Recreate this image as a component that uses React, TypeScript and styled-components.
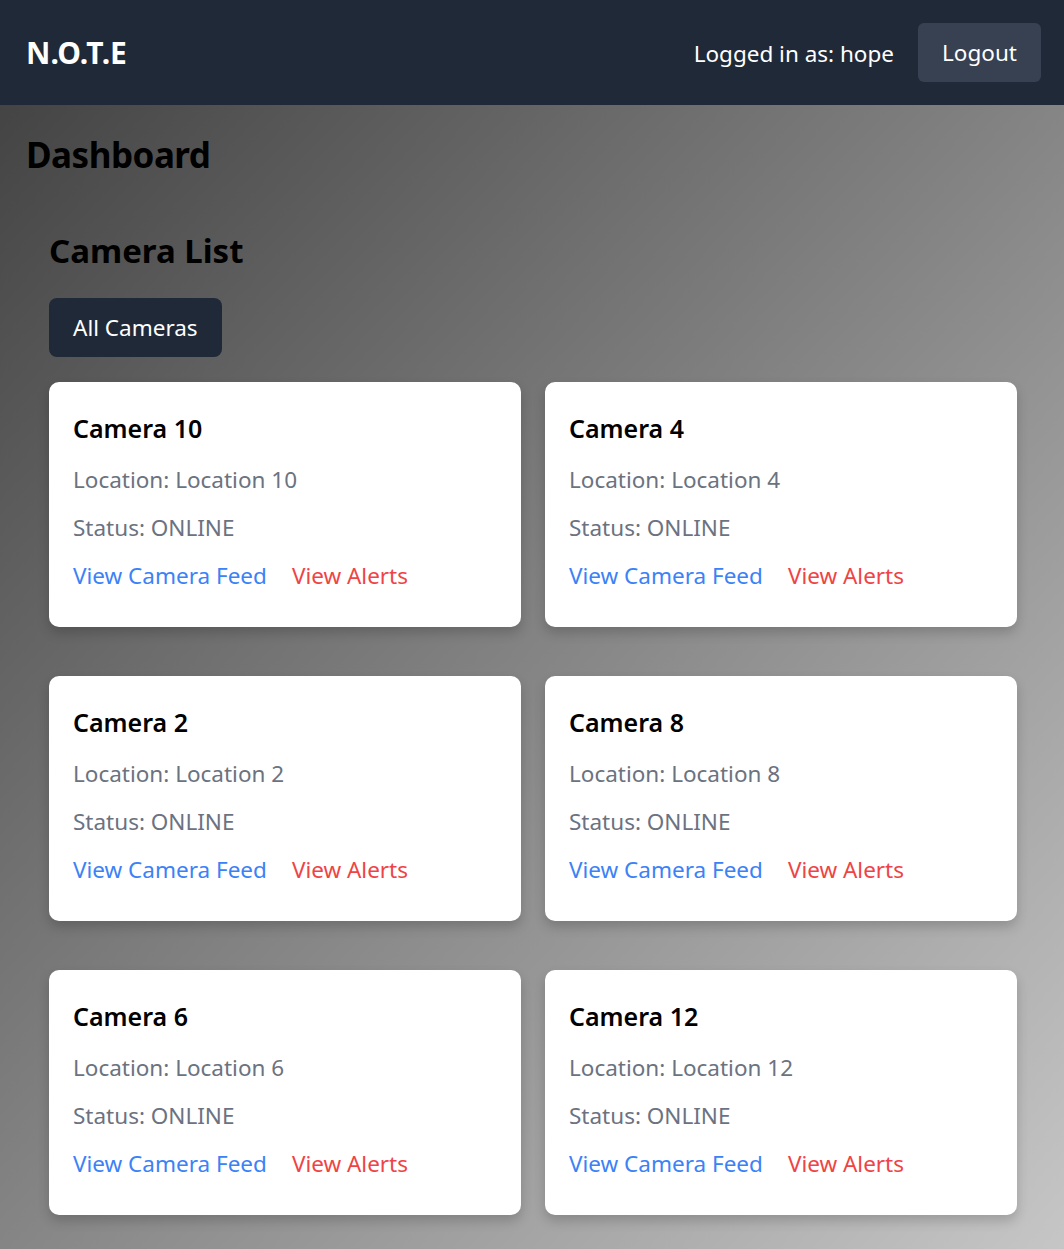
import React from "react";
import styled, { createGlobalStyle } from "styled-components";

const GlobalStyle = createGlobalStyle`
  html, body {
    margin: 0;
    padding: 0;
  }
  body {
    font-family: "Noto Sans", "Open Sans", sans-serif;
    background: #c6c6c6;
  }
  * { box-sizing: border-box; }
`;

const Page = styled.div`
  min-height: 1249px;
  display: flex;
  flex-direction: column;
`;

const Header = styled.header`
  height: 105px;
  background: #1f2937;
  display: flex;
  align-items: center;
  justify-content: space-between;
  padding: 0 23px 0 26px;
  color: #ffffff;
`;

const Logo = styled.div`
  font-size: 30px;
  font-weight: 700;
  line-height: 36px;
`;

const UserArea = styled.div`
  display: flex;
  align-items: center;
  gap: 24px;
`;

const UserText = styled.span`
  font-size: 22.5px;
  line-height: 30px;
  padding-top: 2px;
`;

const LogoutButton = styled.button`
  width: 123px;
  height: 59px;
  border: none;
  border-radius: 6px;
  background: #374151;
  color: #ffffff;
  font-family: inherit;
  font-size: 22.5px;
  cursor: pointer;
`;

const Main = styled.main`
  flex: 1;
  background: linear-gradient(to bottom right, #444444, #c6c6c6);
  padding: 27px 47px 34px 26px;
`;

const PageTitle = styled.h1`
  margin: 0 0 31px;
  font-size: 35px;
  line-height: 45px;
  font-weight: 700;
  letter-spacing: -0.5px;
  color: #000000;
`;

const Section = styled.section`
  padding: 24px 0 0 23px;
`;

const SectionTitle = styled.h2`
  margin: 0 0 28px;
  font-size: 33px;
  line-height: 38px;
  font-weight: 700;
  color: #000000;
`;

const FilterButton = styled.button`
  height: 59px;
  padding: 0 24px;
  border: none;
  border-radius: 8px;
  background: #1f2937;
  color: #ffffff;
  font-family: inherit;
  font-size: 22.5px;
  margin-bottom: 25px;
  cursor: pointer;
`;

const Grid = styled.div`
  display: grid;
  grid-template-columns: repeat(2, 1fr);
  column-gap: 24px;
  row-gap: 49px;
`;

const Card = styled.div`
  background: #ffffff;
  border-radius: 10px;
  padding: 30px 24px 36px;
  box-shadow: 0 6px 12px rgba(0, 0, 0, 0.18);
`;

const CardTitle = styled.h3`
  margin: 0 0 20px;
  font-size: 25px;
  line-height: 33px;
  font-weight: 600;
  color: #000000;
`;

const InfoLine = styled.p`
  margin: 0 0 18px;
  font-size: 22.5px;
  line-height: 30px;
  color: #6b7280;
`;

const Links = styled.div`
  display: flex;
  gap: 25px;
  font-size: 22.5px;
  line-height: 30px;
`;

const CardLink = styled.a<{ $tone: "blue" | "red" }>`
  color: ${(p) => (p.$tone === "blue" ? "#3b82f6" : "#ef4444")};
  text-decoration: none;
  cursor: pointer;
`;

const cameras = [10, 4, 2, 8, 6, 12];

export default function App() {
  return (
    <>
      <GlobalStyle />
      <Page>
        <Header>
          <Logo>N.O.T.E</Logo>
          <UserArea>
            <UserText>Logged in as: hope</UserText>
            <LogoutButton>Logout</LogoutButton>
          </UserArea>
        </Header>
        <Main>
          <PageTitle>Dashboard</PageTitle>
          <Section>
            <SectionTitle>Camera List</SectionTitle>
            <FilterButton>All Cameras</FilterButton>
            <Grid>
              {cameras.map((n) => (
                <Card key={n}>
                  <CardTitle>Camera {n}</CardTitle>
                  <InfoLine>Location: Location {n}</InfoLine>
                  <InfoLine>Status: ONLINE</InfoLine>
                  <Links>
                    <CardLink $tone="blue">View Camera Feed</CardLink>
                    <CardLink $tone="red">View Alerts</CardLink>
                  </Links>
                </Card>
              ))}
            </Grid>
          </Section>
        </Main>
      </Page>
    </>
  );
}
